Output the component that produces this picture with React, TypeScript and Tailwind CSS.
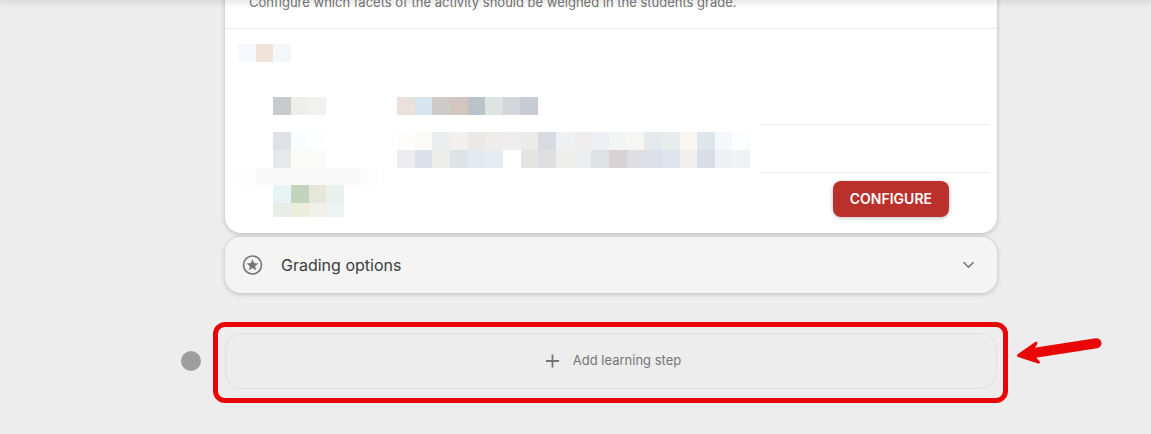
import { useState } from "react";

function Tiles({ colors, className }: { colors: string[]; className: string }) {
  return (
    <div className={`flex ${className}`} aria-hidden="true">
      {colors.map((color, i) => (
        <span key={i} className="flex-1" style={{ backgroundColor: color }} />
      ))}
    </div>
  );
}

const values = {
  title: ["#eae1dd", "#d6e4ef", "#cdccc8", "#d1c7c0", "#bac2ca", "#dfe3e4", "#d1d6da", "#c8ccd4"],
  first: [
    "#fefdf9", "#fafaf8", "#ecedf1", "#f3efed", "#ece8e5", "#eeedec", "#efedef", "#ebebe9", "#d9dadf", "#eff0f3",
    "#efeeec", "#eeeff4", "#f3f5f4", "#f6f6f4", "#e5e9ee", "#e7edec", "#f9f5f0", "#dde5ed", "#f4f8fc", "#fbfdff",
  ],
  second: [
    "#ededf0", "#dae1ea", "#ecedeb", "#dee4e6", "#e5eaee", "#e5ebee", "#ffffff", "#e4e4e2", "#dedfe1", "#f0eeec",
    "#eceef0", "#dde2e4", "#d8d2d2", "#dddde2", "#dce1e9", "#dde5ed", "#f1f0ec", "#d9dee6", "#eff0f3", "#f0f1f4",
  ],
};

function GradeCard() {
  return (
    <section className="-mt-2 rounded-b-2xl bg-white shadow-[0_1px_5px_rgba(0,0,0,0.22)]">
      <p className="border-b border-[#ebebeb] px-6 pb-4 text-[13px] leading-5 text-[#757575]">
        Configure which facets of the activity should be weighed in the students grade.
      </p>
      <div className="pt-[15px] pr-2 pb-4 pl-[13px]">
        <Tiles className="h-[18px] w-[53px]" colors={["#f5f9fd", "#f0e3da", "#f3f7fa"]} />
        <div className="mt-[35px] flex">
          <div className="w-[159px] shrink-0">
            <Tiles className="ml-[35px] h-[18px] w-[53px]" colors={["#c9cacc", "#efeeea", "#f1f1ef"]} />
            <Tiles className="mt-[17px] ml-[35px] h-[18px] w-[53px]" colors={["#dee1e7", "#f8fdff", "#fdffff"]} />
            <Tiles className="ml-[35px] h-[18px] w-[53px]" colors={["#e7e8e9", "#fcfaf6", "#fafaf8"]} />
            <Tiles
              className="h-[17px] w-[141px]"
              colors={["#fdfdfd", "#f9f9f9", "#f9f9f9", "#f9f9f9", "#f9f9f9", "#f9f9f9", "#f9f9f9", "#fdfdfd"]}
            />
            <Tiles className="ml-[35px] h-[18px] w-[71px]" colors={["#e8f3f6", "#c2d4be", "#e4e8d9", "#e8f1ec"]} />
            <Tiles className="ml-[35px] h-[14px] w-[71px]" colors={["#e7eee7", "#ebeedd", "#f0f1e9", "#ecf3f0"]} />
          </div>
          <div className="w-[353px] shrink-0">
            <Tiles className="h-[18px] w-[141px]" colors={values.title} />
            <Tiles className="mt-[17px] h-[18px]" colors={values.first} />
            <Tiles className="h-[18px]" colors={values.second} />
          </div>
          <div className="ml-[10px] flex flex-1 flex-col pt-[27px]">
            <div className="h-12 border-t border-[#ebebeb]" />
            <div className="flex justify-end border-t border-[#ebebeb] pt-2 pr-10">
              <button className="h-9 rounded-lg bg-[#bc302c] px-[17px] text-sm font-semibold text-white shadow-[0_1px_4px_rgba(0,0,0,0.25)]">
                CONFIGURE
              </button>
            </div>
          </div>
        </div>
      </div>
    </section>
  );
}

function GradingOptions() {
  const [open, setOpen] = useState(false);

  return (
    <button
      aria-expanded={open}
      onClick={() => setOpen(!open)}
      className="mt-1 flex h-14 w-full items-center rounded-2xl bg-[#f4f4f4] px-4 text-left text-[#3c3c3c] shadow-[0_1px_5px_rgba(0,0,0,0.22)]"
    >
      <svg className="size-6 text-[#757575]" viewBox="0 0 24 24" fill="none">
        <circle cx="11.5" cy="12" r="9" stroke="currentColor" strokeWidth="1.6" />
        <path
          d="M11.500 6.200L13.100 10.100 17.300 10.400 14.100 13.200 15.100 17.300 11.500 15.100 7.900 17.300 8.900 13.200 5.700 10.400 9.900 10.100Z"
          fill="currentColor"
        />
      </svg>
      <span className="ml-4 flex-1 text-base">Grading options</span>
      <svg className="size-6 text-[#757575]" viewBox="0 0 24 24" fill="none">
        <path d="M6.500 9.200l5 5 5-5" stroke="currentColor" strokeWidth="1.6" />
      </svg>
    </button>
  );
}

function AddStep() {
  return (
    <div className="relative flex-1">
      <button className="flex h-14 w-full items-center justify-center gap-2 rounded-2xl border border-[#dfdfdf] text-[13px] text-[#757575]">
        <svg className="size-6" viewBox="0 0 24 24" fill="none">
          <path d="M11.500 5.500v13M5 12h13" stroke="currentColor" strokeWidth="1.800" />
        </svg>
        Add learning step
      </button>
      <div className="pointer-events-none absolute -top-[11px] -right-[11px] -bottom-[14px] -left-3 rounded-xl border-[5px] border-[#e90606]" />
      <svg
        className="pointer-events-none absolute top-[3px] left-full ml-[18px] h-8 w-[90px]"
        viewBox="0 0 90 32"
        fill="none"
        stroke="#e90606"
        strokeLinecap="round"
        strokeLinejoin="round"
      >
        <path d="M20 16.800L81.500 7.200" strokeWidth="10" />
        <path d="M3.500 19.500L21 7.200 15 17 23.500 26.200Z" fill="#e90606" strokeWidth="3" />
      </svg>
    </div>
  );
}

export default function App() {
  return (
    <div className="relative min-h-screen overflow-hidden bg-[#ededed] font-['Inter',sans-serif]">
      <header className="absolute inset-x-0 top-0 z-10 h-0 shadow-[0_0_6px_1px_rgba(0,0,0,0.3)]" />
      <main className="flow-root pr-[154px] pb-11 pl-[181px]">
        <div className="pl-11">
          <GradeCard />
          <GradingOptions />
        </div>
        <div className="mt-10 flex items-center gap-6">
          <span className="size-5 rounded-full bg-[#9e9e9e]" />
          <AddStep />
        </div>
      </main>
    </div>
  );
}
